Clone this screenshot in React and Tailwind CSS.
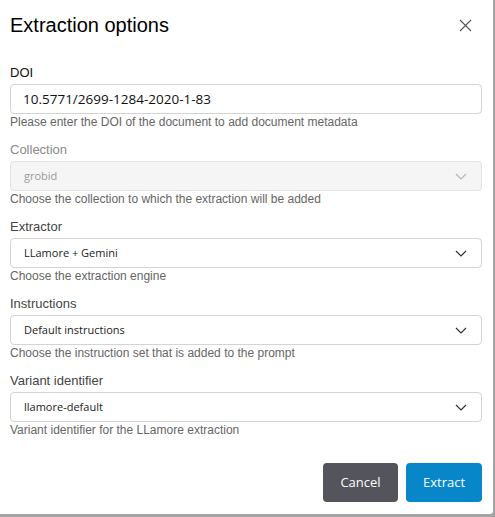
import { useState } from 'react';

const fields = [
  { label: 'Collection', value: 'grobid', help: 'Choose the collection to which the extraction will be added', disabled: true },
  { label: 'Extractor', value: 'LLamore + Gemini', help: 'Choose the extraction engine' },
  { label: 'Instructions', value: 'Default instructions', help: 'Choose the instruction set that is added to the prompt' },
  { label: 'Variant identifier', value: 'llamore-default', help: 'Variant identifier for the LLamore extraction' },
];

function Chevron({ disabled }) {
  return (
    <svg width="12" height="7" viewBox="0 0 12 7" fill="none" className={disabled ? 'text-[#b5b5b5]' : 'text-[#333]'}>
      <polyline points="1,1 6,6 11,1" stroke="currentColor" strokeWidth="1.2" />
    </svg>
  );
}

function SelectField({ label, value, help, disabled }) {
  return (
    <div className="flex flex-col">
      <label className={`text-[13px] leading-4 ${disabled ? 'text-[#8a8a8a]' : 'text-[#444]'}`}>{label}</label>
      <div
        className={`mt-[3px] h-[30px] flex items-center justify-between pl-[13px] pr-[14px] rounded-[4px] border ${
          disabled ? 'bg-[#f5f5f5] border-[#e3e3e3]' : 'bg-white border-[#d4d4d4]'
        }`}
      >
        <span className={`font-['Open_Sans',sans-serif] text-[11px] ${disabled ? 'text-[#9a9a9a]' : 'text-[#222]'}`}>{value}</span>
        <Chevron disabled={disabled} />
      </div>
      <p className="mt-px text-[12px] leading-[15px] text-[#666]">{help}</p>
    </div>
  );
}

export default function App() {
  const [doi, setDoi] = useState('10.5771/2699-1284-2020-1-83');

  return (
    <div className="w-[495px] h-[517px] bg-[#a3a3a3] font-['Liberation_Sans',Arial,sans-serif]">
      <div className="w-[493px] h-[514px] bg-white rounded-br-[3px] flex flex-col pl-[10px] pr-[11px] pb-[12px]">
        {/* Header */}
        <div className="flex items-center justify-between pt-[13px]">
          <h2 className="text-[20px] leading-6 text-black">Extraction options</h2>
          <button className="mr-[10px] text-[#555]">
            <svg width="13" height="13" viewBox="0 0 13 13">
              <path d="M1 1 L12 12 M12 1 L1 12" stroke="currentColor" strokeWidth="1.1" />
            </svg>
          </button>
        </div>

        {/* Body */}
        <div className="flex flex-col gap-3 mt-[28px]">
          <div className="flex flex-col">
            <label className="text-[13px] leading-4 text-[#111]">DOI</label>
            <input
              value={doi}
              onChange={e => setDoi(e.target.value)}
              className="mt-[3px] h-[30px] px-[12px] rounded-[4px] border border-[#d4d4d4] font-['Open_Sans',sans-serif] text-[13.5px] text-[#111] outline-none"
            />
            <p className="mt-px text-[12px] leading-[15px] text-[#666]">
              Please enter the DOI of the document to add document metadata
            </p>
          </div>
          {fields.map(f => (
            <SelectField key={f.label} {...f} />
          ))}
        </div>

        {/* Footer */}
        <div className="mt-auto flex justify-end gap-2 font-['Open_Sans',sans-serif] text-[13px] text-white">
          <button className="w-[75px] h-[39px] rounded-[4px] bg-[#54545c]">Cancel</button>
          <button className="w-[76px] h-[39px] rounded-[4px] bg-[#0787c9]">Extract</button>
        </div>
      </div>
    </div>
  );
}
